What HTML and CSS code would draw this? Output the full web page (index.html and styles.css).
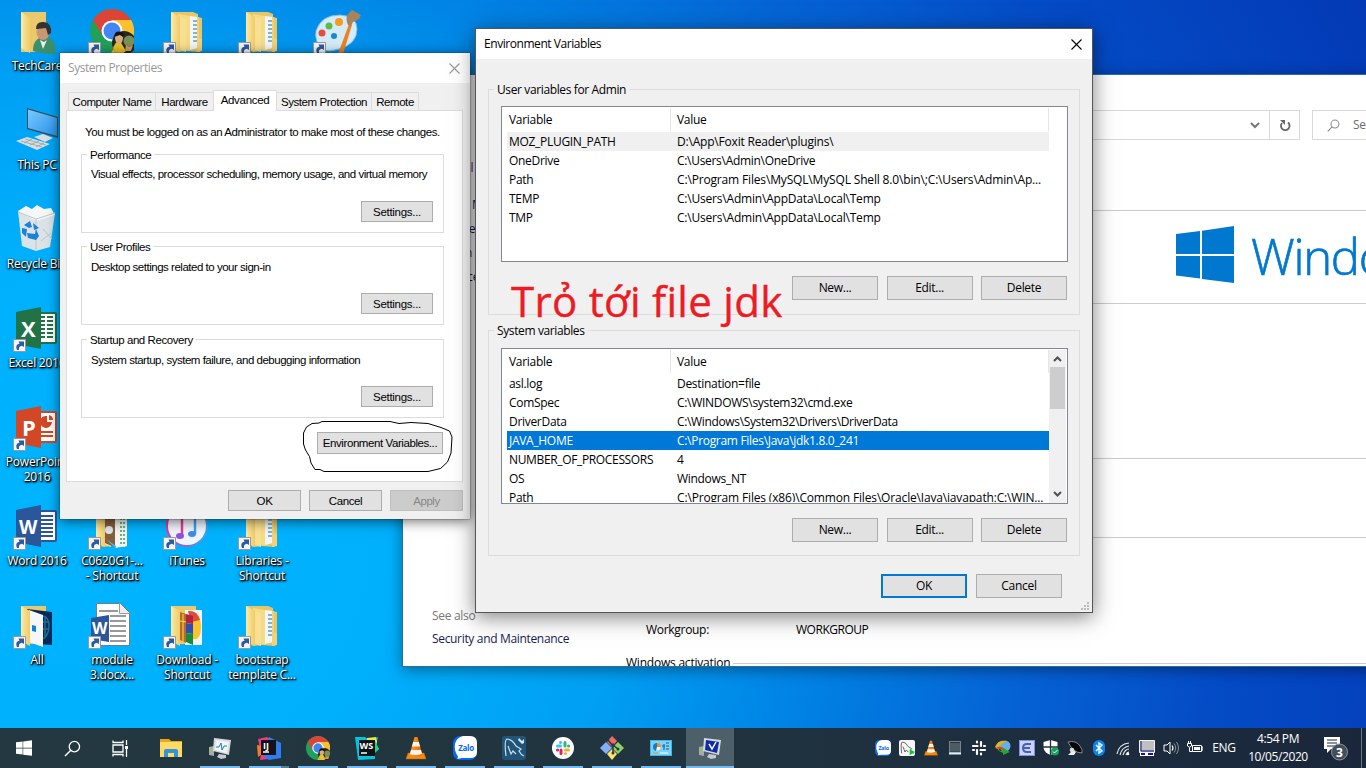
FILE: index.html
```html
<!DOCTYPE html>
<html lang="en">
<head>
<meta charset="utf-8">
<title>Environment Variables</title>
<link rel="stylesheet" href="styles.css">
</head>
<body>
<svg class="defs" aria-hidden="true">
  <defs>
    <linearGradient id="fold" x1="0" x2="1"><stop offset="0" stop-color="#ffe9a2"/><stop offset="1" stop-color="#efcb6b"/></linearGradient>
    <linearGradient id="screen" x1="0" y1="0" x2="1" y2="1"><stop offset="0" stop-color="#7cc8fa"/><stop offset="1" stop-color="#2493ee"/></linearGradient>
    <linearGradient id="tune" x1="0" x2="1"><stop offset="0" stop-color="#f0329b"/><stop offset="1" stop-color="#30a7f4"/></linearGradient>
    <linearGradient id="cone" x1="0" x2="1"><stop offset="0" stop-color="#ffa22e"/><stop offset="1" stop-color="#e86400"/></linearGradient>
    <symbol id="badge" viewBox="0 0 13 13"><path d="M.5.5h12v12H.5z" fill="#f5f5f5" stroke="#999"/><path d="M4 11C2.400 7 4 5 6.500 4.800L5.500 2.500H11V8L9 6.700C6.500 7 5.500 8 6 11z" fill="#2b5b9f"/></symbol>
    <symbol id="folder" viewBox="0 0 49 48"><path d="M8 5h22l5 2v3l4 1v21l-2 13-14-1-8 1-7-4z" fill="#e9c563"/><path d="M15 7l12 2v35l-9-3z" fill="#f6db87"/><path d="M27 9l8 1v31l-8 2z" fill="#f3f6f8"/><path d="M30 14h4M30 18h4M30 22h4M30 26h4M30 30h4M30 34h4" stroke="#5ba0bd" stroke-width="1.500"/><path d="M34 10h2v21l3 1v12l-5 1z" fill="#f3d175"/><path d="M8 5l9 5v35l-9-5z" fill="url(#fold)"/><path d="M17 10l6 2v33l-6-2z" fill="#f9df91"/></symbol>
    <symbol id="chrome" viewBox="0 0 44 44"><circle cx="22" cy="22" r="22" fill="#21a05a"/><path d="M3 11A22 22 0 0 1 41 11H22L13 27z" fill="#db4437"/><path d="M22 11h19.200A22 22 0 0 1 21 44l11-18z" fill="#fbc02d"/><circle cx="22" cy="22" r="10.500" fill="#fff"/><circle cx="22" cy="22" r="8.500" fill="#4285f4"/><circle cx="34" cy="34" r="12" fill="#252724"/><path d="M23 39q2-6 7-7l6 10-4 3-6-1z" fill="#eac126"/><ellipse cx="29" cy="29" rx="4" ry="6" fill="#d8ad86"/><path d="M24 28q1-7 7-5 4 1 2 5l-3-2z" fill="#18120f"/><circle cx="39" cy="32" r="5.500" fill="#7d8f50"/><path d="M36 36q3 3 7 0l-2 6h-6z" fill="#cc9d61"/></symbol>
    <symbol id="vlc" viewBox="0 0 22 24"><path d="M3 17h16l2 6H1z" fill="#f58a0c" stroke="#bf6400" stroke-width=".5"/><path d="M9.500 1h3l5 18q-6 3-13 0z" fill="url(#cone)"/><path d="M8.200 6h5.600l1.300 4.500H7zM6 14h10l1 4q-6 2-12 0z" fill="#f7f4ee"/></symbol>
    <symbol id="zalo" viewBox="0 0 24 24"><rect width="24" height="24" rx="7" fill="#0668f7"/><path d="M10 0h7q7 0 7 7v9q0 6-7 6H9l-5 1q2-2 0-4Q1 14 2 8q1-6 8-8z" fill="#fff"/><text x="13" y="15" text-anchor="middle" class="zalo-text">Zalo</text></symbol>
    <symbol id="slack" viewBox="0 0 22 22"><circle class="disc" cx="11" cy="11" r="11"/><g fill="none" stroke-width="3" stroke-linecap="round"><path class="s1" d="M8.500 5.500v.1M5.500 9h3"/><path class="s2" d="M13 5.500v3.500M16.500 9h.1"/><path class="s3" d="M13.500 16.500v-.1M13.500 13h3"/><path class="s4" d="M9 16.500V13M5.500 13h.1"/></g></symbol>
    <symbol id="dolphin" viewBox="0 0 24 24"><path d="M4 20Q2 4 5 3q5 0 9 7l5 3-2 2q2 4 5 5m-8-2l-3-3-2 3-3-8" fill="none" stroke="currentColor" stroke-width="1.200"/></symbol>
    <symbol id="pc" viewBox="0 0 24 24"><path d="M1 11l5-1v10l-5-1z" fill="#a6acad"/><path d="M2 13h2" stroke="#7ddb27" stroke-width="2"/><path d="M6 2l17 2-2 15-16-4z" fill="#d6dadb"/><path class="glass" d="M8 4l13 2-2 11-12-3z"/><path d="M11 18l7 1v3l-5 1-4-2z" fill="#c6cacb"/></symbol>
    <symbol id="win" viewBox="0 0 58 57"><path d="M0 8l24-3v23H0zM26 4.700L58 0v28H26zM0 30h24v22.500L0 49.500zM26 30h32v27l-32-4z" fill="currentColor"/></symbol>
    <symbol id="glass" viewBox="0 0 18 18"><circle cx="11" cy="7" r="5.500" fill="none" stroke="currentColor" stroke-width="1.400"/><path d="M7 11l-6 6" stroke="currentColor" stroke-width="1.500"/></symbol>
    <symbol id="close" viewBox="0 0 11 11"><path d="M.5.5l10 10m0-10l-10 10" stroke="currentColor" stroke-width="1.100"/></symbol>
  </defs>
</svg>

<main class="desktop">
  <section class="icons">
    <div class="icon c1 r1"><svg viewBox="0 0 49 48"><path d="M8 5h25v40H8z" fill="#eac96c"/><path d="M8 5l9 6v35l-9-5z" fill="url(#fold)"/><path d="M20 44q0-14 12-14t10 17q-14 0-22-3z" fill="#3b8f69"/><ellipse cx="30" cy="25" rx="6.500" ry="8" fill="#c99772"/><path d="M23 22q0-8 8-7 8 1 7 11l-3 2-2-7-9 1z" fill="#333"/><path d="M27 33l3 9 4-9-3 2z" fill="#eee"/></svg><span>TechCare</span></div>
    <div class="icon c2 r1"><svg viewBox="0 0 49 48"><use href="#chrome" x="2" y="2" width="44" height="44"/><use href="#badge" x="0" y="35" width="13" height="13"/></svg></div>
    <div class="icon c3 r1"><svg viewBox="0 0 49 48"><use href="#folder"/><use href="#badge" x="0" y="35" width="13" height="13"/></svg></div>
    <div class="icon c4 r1"><svg viewBox="0 0 49 48"><use href="#folder"/><use href="#badge" x="0" y="35" width="13" height="13"/></svg></div>
    <div class="icon c5 r1"><svg viewBox="0 0 49 48"><path d="M3 24Q8 8 27 8q17 1 17 14 0 15-18 20Q6 48 4 35q-2-6-1-11z" fill="#d4ebf8" stroke="#8cbbdc"/><circle cx="9" cy="26" r="3.500" fill="#ea4b3c"/><circle cx="16" cy="19" r="3.500" fill="#5dbb46"/><circle cx="26" cy="15" r="4" fill="#f79a1d"/><circle cx="21" cy="29" r="3" fill="#1b88d2"/><path d="M25 47l11-30 3 1-9 29z" fill="#ee8222"/><path d="M35 18q-3-6 0-11l4-4 9 5-2 4-6 3-2 4z" fill="#aa835b"/><use href="#badge" x="0" y="35" width="13" height="13"/></svg></div>
    <div class="icon c1 r2"><svg viewBox="0 0 49 48"><path d="M14 2l31 9v21l-31-9z" fill="#384d5c"/><path d="M15 3.500l29 8.500v18l-29-8z" fill="url(#screen)"/><path d="M21 31l9-3 10 4-8 4zM3 35l11-4 23 7-13 6z" fill="#d8dfe2"/><path d="M8 35l21 6M12 33l21 6M11 37l8-4M17 39l9-4M23 41l8-4" stroke="#8e989d" stroke-width=".7"/></svg><span>This PC</span></div>
    <div class="icon c1 r3"><svg viewBox="0 0 49 48"><path d="M5 6l37 2-5 34-14 4-14-5z" fill="#dce3e6"/><path d="M5 6l8-5 6 3 5-4 7 4 7-1 4 7-19 6z" fill="#f5f6f6"/><path d="M5 7l18 7 19-6M23 14v31M30 24l9 10M28 36l10-8" stroke="#bac7cc" fill="none"/><path d="M11 20l6-4 2 6-3 1zM9 23l5 1-1 8-4-4zM15 33l-1-5 8 1 1-5 3 7-3 4zM20 18l6 5-5 2z" fill="#1b82d7"/></svg><span>Recycle Bin</span></div>
    <div class="icon c1 r4"><svg viewBox="0 0 49 48"><rect x="25" y="8" width="19" height="32" rx="2" fill="#217346"/><path d="M27 10h15v28H27z" fill="#fff"/><path d="M28 13h4m2 0h6M28 17h4m2 0h6M28 21h4m2 0h6M28 25h4m2 0h6M28 29h4m2 0h6M28 33h4m2 0h6" stroke="#217346" stroke-width="2"/><path d="M3 8l25-5v42L3 40z" fill="#217346"/><text class="office" x="8" y="33">X</text><use href="#badge" x="0" y="35" width="13" height="13"/></svg><span>Excel 2016</span></div>
    <div class="icon c1 r5"><svg viewBox="0 0 49 48"><rect x="25" y="8" width="19" height="32" rx="2" fill="#d24726"/><path d="M27 10h15v28H27z" fill="#fff"/><path d="M28 29h12m-12 4h12" stroke="#d24726" stroke-width="2"/><path d="M34 13a6 6 0 1 0 5 6h-5z" fill="#d24726"/><path d="M36 12q4 1 4 5h-4z" fill="#d24726"/><path d="M3 8l25-5v42L3 40z" fill="#d24726"/><text class="office" x="9" y="33">P</text><use href="#badge" x="0" y="35" width="13" height="13"/></svg><span>PowerPoint<br>2016</span></div>
    <div class="icon c1 r6"><svg viewBox="0 0 49 48"><rect x="25" y="8" width="19" height="32" rx="2" fill="#2b579a"/><path d="M27 10h15v28H27z" fill="#fff"/><path d="M28 14h12m-12 4h12m-12 4h12m-12 4h12m-12 4h12m-12 4h12" stroke="#2b579a" stroke-width="2"/><path d="M3 8l25-5v42L3 40z" fill="#2b579a"/><text class="office w" x="6" y="32">W</text><use href="#badge" x="0" y="35" width="13" height="13"/></svg><span>Word 2016</span></div>
    <div class="icon c2 r6"><svg viewBox="0 0 49 48"><use href="#folder"/><path d="M17 8l11 4v34l-11-5z" fill="#85603b"/><circle cx="21" cy="28" r="4" fill="#dce7ee"/><path d="M27 12l12-3v35l-12 2z" fill="#f5f5f1"/><path d="M33 12v30M36 12v30" stroke="#3a986f" stroke-width="1.500" stroke-dasharray="2 2"/><path d="M18 37l10 7v3z" fill="#4cb9ed"/><use href="#badge" x="0" y="35" width="13" height="13"/></svg><span>C0620G1-...<br>- Shortcut</span></div>
    <div class="icon c3 r6"><svg viewBox="0 0 49 48"><circle cx="24" cy="24" r="20" fill="#f0f4fb" stroke="url(#tune)" stroke-width="2"/><path d="M19 34V15l13-3v20" fill="none" stroke="url(#tune)" stroke-width="2.500"/><ellipse cx="17" cy="34" rx="4" ry="3" fill="#9051dd"/><ellipse cx="29" cy="32" rx="4" ry="3" fill="#428be7"/><use href="#badge" x="0" y="35" width="13" height="13"/></svg><span>iTunes</span></div>
    <div class="icon c4 r6"><svg viewBox="0 0 49 48"><use href="#folder"/><use href="#badge" x="0" y="35" width="13" height="13"/></svg><span>Libraries -<br>Shortcut</span></div>
    <div class="icon c1 r7"><svg viewBox="0 0 49 48"><path d="M8 5h25v38H8z" fill="#eac96c"/><path d="M14 8l25 3v33l-16-1z" fill="#062a57"/><path d="M30 15q6 1 6 10t-6 13M28 21h8M28 28h8M32 15v22" stroke="#1a6f99" fill="none" stroke-width="1.500"/><path d="M16 9l14 5v32l-14-5z" fill="#f5f6f8"/><path d="M19 24l4 1v6l-4-1z" fill="#0d81db"/><path d="M8 5l9 5v35l-9-5z" fill="url(#fold)"/><use href="#badge" x="0" y="35" width="13" height="13"/></svg><span>All</span></div>
    <div class="icon c2 r7"><svg viewBox="0 0 49 48"><path d="M8.500 2.500h24l9 9v33h-33z" fill="#fff" stroke="#6e7e8d"/><path d="M31.500 2.500v10h10" fill="#eee" stroke="#999"/><path d="M11 10h19M22 15h16M22 20h16M22 25h16M22 30h16M22 35h16M22 40h16" stroke="#777" stroke-width="1.500"/><path d="M3 17l18-3v27L3 38z" fill="#2b579a"/><text class="office small" x="4" y="33">W</text><use href="#badge" x="0" y="35" width="13" height="13"/></svg><span>module<br>3.docx...</span></div>
    <div class="icon c3 r7"><svg viewBox="0 0 49 48"><path d="M8 5h25v38H8z" fill="#eac96c"/><path d="M22 9h17v35H22z" fill="#f5f5f5"/><path d="M26 11q12-2 12 16 0 13-9 11z" fill="#f7c62e"/><path d="M25 10q9-1 12 9l-9 2z" fill="#df4b3c"/><path d="M17 11l6 2v29l-6-3z" fill="#b76c26"/><path d="M23 13l7 2v8l-7-1z" fill="#b5223e"/><path d="M23 22l7 1v10l-7-1z" fill="#304db2"/><path d="M23 32l7 1v11l-7-3z" fill="#168c3d"/><path d="M20 13v28M17 20l6 1" stroke="#ffd94f"/><path d="M8 5l9 5v35l-9-5z" fill="url(#fold)"/><use href="#badge" x="0" y="35" width="13" height="13"/></svg><span>Download -<br>Shortcut</span></div>
    <div class="icon c4 r7"><svg viewBox="0 0 49 48"><use href="#folder"/><use href="#badge" x="0" y="35" width="13" height="13"/></svg><span>bootstrap<br>template C...</span></div>
  </section>

  <section class="window system">
    <div class="nav">
      <div class="address"><svg class="chev" viewBox="0 0 10 7"><path d="M1 1l4 4 4-4" fill="none" stroke="#777" stroke-width="2"/></svg><i></i><svg class="reload" viewBox="0 0 12 13"><path d="M9 3.500A4.300 4.300 0 1 1 3 4" fill="none" stroke="#666" stroke-width="1.800"/><path d="M1 1h5v5L4.500 4.500z" fill="#666"/></svg></div>
      <div class="search"><svg><use href="#glass"/></svg><span>Search</span></div>
    </div>
    <div class="split">
      <aside>
        <p class="visited home">Control</p><p>Device M</p><p>Remote</p><p class="visited">System P</p><p>Advance</p>
        <h4>See also</h4><p class="link">Security and Maintenance</p>
      </aside>
      <div class="info">
        <div class="brand"><svg><use href="#win"/></svg><span>Windows</span></div>
        <div class="specs"></div><div class="pen"></div>
        <dl><dt>Computer description:</dt><dd></dd><dt>Workgroup:</dt><dd class="wg">WORKGROUP</dd></dl>
        <h5>Windows activation</h5>
      </div>
    </div>
  </section>

  <section class="window props">
    <header>System Properties<svg><use href="#close"/></svg></header>
    <div class="tabs"><span class="t1">Computer Name</span><span class="t2">Hardware</span><span class="t3 on">Advanced</span><span class="t4">System Protection</span><span class="t5">Remote</span></div>
    <div class="panel">
      <p class="note">You must be logged on as an Administrator to make most of these changes.</p>
      <div class="group"><h3>Performance</h3><p>Visual effects, processor scheduling, memory usage, and virtual memory</p><button>Settings...</button></div>
      <div class="group"><h3>User Profiles</h3><p>Desktop settings related to your sign-in</p><button>Settings...</button></div>
      <div class="group"><h3>Startup and Recovery</h3><p>System startup, system failure, and debugging information</p><button>Settings...</button></div>
      <button class="env-btn">Environment Variables...</button>
    </div>
    <footer><button>OK</button><button>Cancel</button><button class="off">Apply</button></footer>
    <svg class="loop" viewBox="300 418 156 58"><path d="M341 421.500H390L399 423.500 411 422.500 428 423.500 441 427.500 449.500 431 452 437 451 453 447.500 462 440.500 468.500 428 471.500H324L320 469.500H315L311 463 309.500 456.500 305.500 450 303.500 444V433L306.500 427 312 423.500 319 423 322 421.500H341" fill="none" stroke="#000"/></svg>
  </section>

  <section class="window env">
    <header>Environment Variables<svg><use href="#close"/></svg></header>
    <div class="box user">
      <h3>User variables for Admin</h3>
      <div class="list">
        <div class="head"><span>Variable</span><span>Value</span></div>
        <div class="row hot"><span>MOZ_PLUGIN_PATH</span><span class="mid">D:\App\Foxit Reader\plugins\</span></div>
        <div class="row"><span>OneDrive</span><span>C:\Users\Admin\OneDrive</span></div>
        <div class="row"><span>Path</span><span class="long">C:\Program Files\MySQL\MySQL Shell 8.0\bin\;C:\Users\Admin\Ap...</span></div>
        <div class="row"><span>TEMP</span><span class="mid">C:\Users\Admin\AppData\Local\Temp</span></div>
        <div class="row"><span>TMP</span><span class="mid">C:\Users\Admin\AppData\Local\Temp</span></div>
      </div>
      <div class="actions"><button>New...</button><button>Edit...</button><button>Delete</button></div>
    </div>
    <div class="box sys">
      <h3>System variables</h3>
      <div class="list">
        <div class="head"><span>Variable</span><span>Value</span></div>
        <div class="row"><span>asl.log</span><span>Destination=file</span></div>
        <div class="row"><span>ComSpec</span><span>C:\WINDOWS\system32\cmd.exe</span></div>
        <div class="row"><span>DriverData</span><span class="tight">C:\Windows\System32\Drivers\DriverData</span></div>
        <div class="row sel"><span>JAVA_HOME</span><span>C:\Program Files\Java\jdk1.8.0_241</span></div>
        <div class="row"><span class="tight">NUMBER_OF_PROCESSORS</span><span>4</span></div>
        <div class="row"><span>OS</span><span>Windows_NT</span></div>
        <div class="row"><span>Path</span><span class="long">C:\Program Files (x86)\Common Files\Oracle\Java\javapath;C:\WIN...</span></div>
        <div class="scroll"><svg viewBox="0 0 9 6"><path d="M1 5l3.500-3.500L8 5"/></svg><i></i><svg viewBox="0 0 9 6"><path d="M1 1l3.500 3.500L8 1"/></svg></div>
      </div>
      <div class="actions"><button>New...</button><button>Edit...</button><button>Delete</button></div>
    </div>
    <footer><button class="default">OK</button><button>Cancel</button></footer>
    <svg class="grip" viewBox="0 0 8 8"><path d="M6 0h2v2H6zM3 3h2v2H3zM6 3h2v2H6zM0 6h2v2H0zM3 6h2v2H3zM6 6h2v2H6z" fill="#bbb"/></svg>
  </section>
  <div class="caption">Trỏ tới file jdk</div>
</main>

<nav class="taskbar">
  <div class="app"><svg class="s16"><use href="#win"/></svg></div>
  <div class="app"><svg class="s17"><use href="#glass"/></svg></div>
  <div class="app view"><svg class="s17" viewBox="0 0 17 17"><path d="M1 .5v2h10v-2M1 16.500v-2h10v2M1 5h10v7H1zM14.500 0v5M14.500 9v8" fill="none" stroke="#fff" stroke-width="1.300"/><path d="M13 6h3v3h-3z" fill="#fff"/></svg></div>
  <div class="app"><svg viewBox="0 0 24 24"><path d="M1 3h9l2 2h11v16H1z" fill="#e8a915"/><path d="M1 6h22v15H1z" fill="#ffda65"/><path d="M5 21v-6q0-2 2-2h10q2 0 2 2v6h-4v-4H9v4z" fill="#3195dc"/></svg></div>
  <div class="app run"><svg class="white" viewBox="0 0 24 24"><use href="#pc"/><path d="M8 11h3l2-4 1 7 2-4h3" fill="none" stroke="#237caf" stroke-width="1"/></svg></div>
  <div class="app run multi"><svg viewBox="0 0 24 24"><path d="M1 3l9-2 6 4-4 18-9 1 1-6z" fill="#f33b79"/><path d="M12 1l12 6v15l-12 2-6-4z" fill="#307cf0"/><path d="M0 9l5 1v8l-4 3z" fill="#f87b25"/><path d="M4 4h15v15H4z" fill="#151219"/><path d="M6 16h6" stroke="#fff" stroke-width="1.500"/><text class="ide" x="6" y="12.500">IJ</text></svg></div>
  <div class="app run"><svg><use href="#chrome"/></svg></div>
  <div class="app run"><svg viewBox="0 0 24 24"><path d="M0 1l10 0 4 3 9-3-2 8 3 4-4 4v6L3 24z" fill="#07c3df"/><path d="M12 2l9-1 1 5-2 7-8-8z" fill="#e4ed45"/><path d="M20 5l4 8-4 3z" fill="#19d68c"/><path d="M4 4h16v16H4z" fill="#101315"/><path d="M6 17h6" stroke="#fff" stroke-width="1.500"/><text class="ide" x="4.500" y="12.500">WS</text></svg></div>
  <div class="app run"><svg><use href="#vlc"/></svg></div>
  <div class="app run"><svg><use href="#zalo"/></svg></div>
  <div class="app run"><svg viewBox="0 0 24 24"><rect width="24" height="24" rx="3" fill="#205579"/><use href="#dolphin" color="#cbdfed"/><path d="M17 2l3 3 2-2v4l-2 1-4-4z" fill="#dae5ec"/></svg></div>
  <div class="app run"><svg class="s22 colors"><use href="#slack"/></svg></div>
  <div class="app run"><svg viewBox="0 0 24 24"><path d="M12 0l5 5-5 6-5-5z" fill="#f26a68"/><path d="M0 12l6-6 6 6-6 6z" fill="#82b1f8"/><path d="M18 6l6 6-6 6-6-6z" fill="#92cf64"/><path d="M12 13l5 5-5 6-5-6z" fill="#ffe06a"/><path d="M8 4l5 6v8M13 9l5 4" stroke="#263b43" stroke-width="1.500" fill="none"/><circle cx="13" cy="9" r="1.800" fill="#263b43"/><circle cx="18" cy="13" r="1.500" fill="#263b43"/><circle cx="13" cy="17" r="1.500" fill="#263b43"/></svg></div>
  <div class="app run"><svg viewBox="0 0 24 24"><rect x="1.500" y="4.500" width="21" height="15" fill="#7bd2fa" stroke="#42b7ef"/><circle cx="8" cy="11" r="3.500" fill="#fff"/><path d="M8 7v4h4q0-4-4-4z" fill="#f28d22"/><path d="M8 11V7q-4 0-4 4 0 3 3 4" fill="#177cc3"/><path d="M13 10h3M15 8v6M17 7h3M17 10h3M17 13h3" stroke="#175d94"/><path d="M4 17h5" stroke="#f5921e"/><path d="M11 17h8" stroke="#fff"/></svg></div>
  <div class="app run active"><svg class="blue" viewBox="0 0 24 24"><use href="#pc"/><path d="M11 8l3 5 4-7" fill="none" stroke="#fff" stroke-width="1.500"/></svg></div>
  <div class="tray">
    <svg class="mini"><use href="#zalo"/></svg>
    <svg class="mini" viewBox="0 0 24 24"><rect width="24" height="24" rx="3" fill="#f6f6f6"/><use href="#dolphin" color="#444"/><path d="M16 14l8 4-8 5z" fill="#08c925"/></svg>
    <svg class="mini"><use href="#vlc"/></svg>
    <svg class="mini" viewBox="0 0 16 16"><path d="M2 1h12v13H2z" fill="#75838c"/><path d="M3 2h10v10H3z" fill="#24333d"/><path d="M4 3v9M6 3v9M8 3v9M10 3v9M12 3v9M3 4h10M3 6h10M3 8h10M3 10h10" stroke="#84929a" stroke-width=".5"/><path d="M2 13.500h12" stroke="#d8f2fc" stroke-width="2"/></svg>
    <svg class="mini" viewBox="0 0 16 16"><path d="M6 1.500v1M2 6h4.500M10 2v4M13 6h1M14 10H9.500M10 13.500v1M6 14v-4M2 10h1" fill="none" stroke="#fff" stroke-width="2.200" stroke-linecap="round"/></svg>
    <svg class="mini" viewBox="0 0 16 16"><circle cx="10" cy="6" r="5.500" fill="#6aaee5"/><path d="M0 7q4-9 12-5Q5 2 4 10z" fill="#dfb41f"/><path d="M0 9q5-5 11 1l-2 2Q6 7 0 9z" fill="#d94423"/><path d="M2 10l6 1V8l7 4-7 3v-2z" fill="#20aa28"/></svg>
    <svg class="mini" viewBox="0 0 16 16"><path d="M0 0h16v16H0z" fill="#7a8fe8"/><path d="M1 1h14v14H1z" fill="#cbd3fa"/><path d="M12 4H8q-4 0-4 4t4 4h4M5 8h6" fill="none" stroke="#4860b5" stroke-width="2"/></svg>
    <svg class="mini" viewBox="0 0 16 16"><path d="M7.500 0l7 2v6q-1 5-7 7-6-2-7-7V2z" fill="#fff"/><path d="M7.500 0v16M0 7h15" stroke="#25313b" stroke-width="1.300"/><circle cx="12" cy="11.500" r="4" fill="#16a05d"/><path d="M10 11.500l1.500 1.500 3-3" fill="none" stroke="#fff"/></svg>
    <svg class="mini" viewBox="0 0 16 16"><path d="M1 2q8-2 12 4 3 4 2 7Q6 13 1 2z" fill="#080808" stroke="#888"/><path d="M5 9l4 3-2 3H1l3-3z" fill="#eee"/><circle cx="5" cy="10" r="2.300" fill="#ddd"/></svg>
    <svg class="mini" viewBox="0 0 16 16"><rect x="2" width="12" height="16" rx="6" fill="#0986ed"/><path d="M5 5l6 6-3 2V3l3 2-6 6" fill="none" stroke="#fff" stroke-width="1.300"/></svg>
    <svg class="mini" viewBox="0 0 16 16"><path d="M2 14Q4 4 14 3M5 15Q7 7 14 6M8 15q2-6 6-6M11 15q1-3 3-3" fill="none" stroke="#e6eaec" stroke-width="1.200"/><circle cx="13" cy="14" r="1.300" fill="#fff"/></svg>
    <svg class="mini" viewBox="0 0 16 16"><path d="M.5.500h15v12H.500z" fill="#c0c0c0" stroke="#f4f4f4"/><path d="M2 1v10h13" fill="none" stroke="#111180"/><path d="M1 13h14v3H1z" fill="#fff"/><path d="M2 14h4m3 0h5" stroke="#1212a0" stroke-width="2"/></svg>
    <svg class="mini" viewBox="0 0 16 16"><path d="M1 5h3l3-3v12l-3-3H1z" fill="none" stroke="#fff"/><path d="M9 5.500q2 2.500 0 5" fill="none" stroke="#fff" stroke-width="1.200"/><path d="M11 3.500q3.500 4.500 0 9M13.500 2q4 6 0 12" fill="none" stroke="#83909c"/></svg>
    <svg class="mini" viewBox="0 0 16 16"><path d="M5.500 5.500h9v6h-9zM15 7h1v3h-1M2.500 7.500v4h3M.5 3.500h4v2.500q-2 2.500-4 0zM1.500 1v2M3.500 1v2" fill="none" stroke="#fff"/><path d="M7 7h6v3H7z" fill="#fff"/></svg>
    <span class="lang">ENG</span>
    <span class="clock">4:54 PM<br>10/05/2020</span>
    <svg class="notice" viewBox="0 0 26 26"><path d="M1 2h16v12H8l-4 4v-4H1z" fill="#fff"/><path d="M4 5h10M4 8h10M4 11h10" stroke="#1b2b3c" stroke-width="1.200"/><circle cx="16.500" cy="17" r="8" fill="#444e58" stroke="#89929a"/><text x="16.500" y="21.500" text-anchor="middle" class="count">3</text></svg>
    <i class="peek"></i>
  </div>
</nav>
</body>
</html>
```
FILE: styles.css
```css
* { box-sizing: border-box; }
body { margin: 0; width: 1366px; height: 768px; overflow: hidden; font: 12px/16px "Open Sans", "Noto Sans", sans-serif; color: #000; letter-spacing: -.3px; }
h3, h4, h5, p, dl, dd { margin: 0; font-size: inherit; font-weight: normal; }
svg { display: block; flex: none; }
.defs { position: absolute; width: 0; height: 0; }

.desktop { position: relative; height: 728px; overflow: hidden; background: radial-gradient(ellipse 1500px 1250px at 60px 540px, #00b4ff 0, #00b0fd 22%, #009ff3 38%, #0084e5 50%, #0564d5 64%, #044bc6 78%, #0336b2 100%); }
.icons { display: grid; grid-template-columns: repeat(5, 75px); grid-template-rows: repeat(7, 99px); }
.icon { padding-top: 7px; display: flex; flex-direction: column; align-items: center; color: #fff; text-align: center; line-height: 15px; white-space: nowrap; text-shadow: 1px 1px 1px #000, 1px 1px 2px #000, 0 1px 3px #000; letter-spacing: -.22px; }
.icon svg { width: 49px; height: 48px; margin-bottom: 3px; }
.icon span { padding-right: 1px; }
.c1 { grid-column: 1; } .c2 { grid-column: 2; } .c3 { grid-column: 3; } .c4 { grid-column: 4; } .c5 { grid-column: 5; }
.r1 { grid-row: 1; } .r2 { grid-row: 2; } .r3 { grid-row: 3; } .r4 { grid-row: 4; } .r5 { grid-row: 5; } .r6 { grid-row: 6; } .r7 { grid-row: 7; }
.office { font: bold 22px "Open Sans", sans-serif; fill: #fff; text-shadow: none; letter-spacing: 0; }
.office.w { font-size: 19px; letter-spacing: -1px; }
.office.small { font-size: 16px; }
.zalo-text { font: bold 8px "Open Sans", sans-serif; fill: #0668f7; letter-spacing: -.3px; }
.ide { font: bold 9px "Open Sans", sans-serif; fill: #fff; letter-spacing: 0; }

.window { position: absolute; }
button { font: inherit; letter-spacing: inherit; color: #000; padding: 0; background: #e1e1e1; border: 1px solid #adadad; height: 24px; display: block; }
header { height: 30px; background: #fff; display: flex; align-items: center; justify-content: space-between; padding-left: 8px; letter-spacing: -.44px; }
header svg { width: 11px; height: 11px; }

.system { left: 402px; top: 74px; width: 1000px; height: 593px; overflow: hidden; background: #fff; border: 1px solid #2a6f9c; box-shadow: 0 3px 14px rgba(0,0,0,.4); }
.nav { display: flex; margin: 35px 0 0 151px; height: 30px; gap: 12px; }
.address { width: 746px; border: 1px solid #d9d9d9; display: flex; align-items: center; justify-content: flex-end; flex: none; margin-left: 0; }
.address .chev { width: 10px; height: 7px; }
.address i { height: 28px; width: 1px; background: #d9d9d9; margin: 0 9px; }
.address .reload { width: 12px; height: 13px; margin-right: 8px; }
.search { flex: none; width: 200px; border: 1px solid #d9d9d9; display: flex; align-items: center; padding-left: 14px; gap: 13px; color: #6d6d6d; white-space: nowrap; }
.search svg { width: 13px; height: 13px; color: #888; }
.split { display: grid; grid-template-columns: 223px 1fr; }
aside { padding-left: 29px; color: #151c55; line-height: 24px; letter-spacing: 0; }
aside .home { padding: 16px 0 13px; }
aside .link { letter-spacing: -.33px; margin-top: -1px; }
.visited { color: #641a74; }
aside h4 { color: #7a7a7a; margin-top: 315px; letter-spacing: -.3px; }
.info { padding-top: 70px; }
.brand { height: 94px; border: solid #ccc; border-width: 1px 0; padding: 15px 0 0 550px; display: flex; gap: 17px; color: #0078d0; white-space: nowrap; }
.brand svg { width: 58px; height: 57px; }
.brand span { font-size: 49px; line-height: 60px; font-weight: 300; letter-spacing: -1.3px; -webkit-text-stroke: .7px #0078d0; }
.specs { height: 154px; }
.pen { height: 80px; border: solid #ccc; border-width: 1px 0; }
dl { margin: 56px 0 0 20px; display: grid; grid-template-columns: 150px 1fr; line-height: 24px; letter-spacing: -.3px; }
dl dt:first-child { margin-top: 3px; height: 21px; line-height: 18px; }
.wg { letter-spacing: -.48px; }
h5 { margin-top: 13px; display: flex; align-items: center; gap: 3px; letter-spacing: -.22px; }
h5::after { content: ""; flex: 1; height: 1px; background: #ccc; }

.props { left: 60px; top: 53px; width: 410px; height: 466px; background: #f0f0f0; box-shadow: 0 2px 12px rgba(0,0,0,.6), 0 0 1px #222; font: 11.500px/16px "Liberation Sans", sans-serif; letter-spacing: -.42px; }
.props header { color: #999; font: 12px/16px "Open Sans", sans-serif; letter-spacing: -.45px; padding-right: 10px; }
.tabs { display: flex; align-items: flex-end; height: 27px; padding-left: 8px; text-align: center; }
.tabs span { height: 18px; border: 1px solid #dcdcdc; border-width: 1px 1px 0 0; line-height: 19px; }
.tabs .t1 { width: 88px; border-left-width: 1px; } .tabs .t2 { width: 57px; border-right: 0; }
.tabs .t3 { width: 64px; } .tabs .t4 { width: 95px; } .tabs .t5 { width: 47px; }
.tabs .on { height: 21px; margin-bottom: -1px; background: #fff; border-left-width: 1px; line-height: 18px; z-index: 1; }
.tabs .on, .group button { letter-spacing: -.3px; }
.panel { margin: 0 7px 0 6px; height: 372px; border: 1px solid #dcdcdc; background: #fff; padding: 0 18px 0 14px; white-space: nowrap; }
.note { padding: 13px 0 0 4px; margin-bottom: 14px; }
.group { height: 79px; border: 1px solid #dcdcdc; margin-bottom: 14px; padding: 0 10px 0 9px; }
.group:nth-child(2) { margin-bottom: 13px; }
h3 { width: fit-content; margin-top: -8px; padding: 0 3px; }
.group h3 { margin-left: -4px; background: #fff; }
.group p { margin: 4px 0 18px; letter-spacing: -.48px; }
.group:nth-child(2) p { margin: 3px 0 19px; }
.group button { margin-left: auto; width: 72px; height: 21px; }
.env-btn { width: 126px; height: 22px; margin: 0 1px 0 auto; }
.props footer { display: flex; gap: 8px; justify-content: flex-end; padding: 8px 7px 0 0; }
.props footer button { width: 73px; height: 21px; }
.props footer .off { background: #ccc; border-color: #bfbfbf; color: #888; }
.loop { position: absolute; left: 240px; top: 365px; width: 156px; height: 58px; }

.env { left: 475px; top: 28px; width: 618px; height: 585px; background: #f0f0f0; border: 1px solid #555; box-shadow: 0 4px 20px rgba(0,0,0,.5); }
.env header { padding-right: 10px; }
.box { width: 592px; height: 226px; margin-left: 12px; border: 1px solid #dcdcdc; }
.user { margin-top: 30px; } .sys { margin-top: 15px; }
.box h3 { margin-left: 5px; background: #f0f0f0; letter-spacing: -.38px; }
.list { position: relative; margin: 8px 0 14px 12px; width: 567px; height: 156px; border: 1px solid #828790; background: #fff; overflow: hidden; padding-left: 5px; white-space: nowrap; }
.list::after { content: ""; position: absolute; left: 0; bottom: 0; width: 547px; height: 1px; background: #fff; }
.sys .list { margin-top: 9px; }
.head, .row { display: grid; grid-template-columns: 164px 378px; line-height: 19px; }
.head { height: 25px; padding: 1px 0; line-height: 23px; }
.head span { border-right: 1px solid #e5e5e5; }
.head span, .row span { padding-left: 2px; }
.head span + span, .row span + span { padding-left: 6px; }
.row { width: 542px; }
.row .mid { letter-spacing: -.2px; } .row .long { letter-spacing: -.16px; } .row .tight { letter-spacing: -.35px; }
.hot { background: #f0f0f0; } .sel { background: #0078d7; color: #fff; }
.actions { display: flex; margin-left: 303px; gap: 8.500px; }
.actions button, .env footer button { width: 86px; }
.env footer { display: flex; gap: 9px; margin: 18px 0 0 405px; }
.env footer .default { border: 2px solid #0078d7; }
.scroll { position: absolute; right: 1px; top: 1px; width: 17px; height: 153px; background: #f0f0f0; display: flex; flex-direction: column; align-items: center; }
.scroll svg { width: 9px; height: 6px; margin: 6px 0 5px; }
.scroll svg:last-child { margin-top: auto; margin-bottom: 6px; }
.scroll path { fill: none; stroke: #505050; stroke-width: 2; }
.scroll i { width: 15px; height: 42px; background: #cdcdcd; }
.grip { position: absolute; right: 3px; bottom: 2px; width: 8px; height: 8px; }
.caption { position: absolute; left: 511px; top: 271px; color: #ed1c24; font-size: 42px; line-height: 60px; letter-spacing: .3px; white-space: nowrap; -webkit-text-stroke: .4px #ed1c24; }

.taskbar { height: 40px; display: flex; background: linear-gradient(90deg, #233840, #20343f 50%, #1c2c3e 80%, #1a273a); color: #fff; }
.app { width: 48px; margin-right: 1px; display: flex; align-items: center; justify-content: center; }
.app:nth-child(-n+2) { margin-right: 0; }
.view { margin-right: 3px; }
.app svg { width: 24px; height: 24px; }
.app .s16 { width: 16px; height: 16px; } .app .s17 { width: 17px; height: 17px; } .app .s22 { width: 22px; height: 22px; }
.run { background: linear-gradient(#76b9ed, #76b9ed) center bottom / 40px 2px no-repeat; }
.multi { background: linear-gradient(90deg, #76b9ed 32px, #587e9e 32px) center bottom / 40px 2px no-repeat; }
.active { background-color: #4d5f69; background-size: 48px 2px; }
.white { fill: #f0f5f7; } .blue { fill: #102ba8; }
.colors { fill: #fff; --s1: #36c5f0; --s2: #2eb67d; --s3: #ecb22e; --s4: #e01e5a; }
.s1 { stroke: var(--s1); } .s2 { stroke: var(--s2); } .s3 { stroke: var(--s3); } .s4 { stroke: var(--s4); }
.tray { margin-left: auto; display: flex; align-items: center; width: 495px; flex: none; }
.mini { width: 16px; height: 16px; margin: 0 4px; }
.lang { width: 34px; text-align: center; }
.clock { width: 76px; margin-left: -1px; text-align: center; line-height: 18px; letter-spacing: -.4px; }
.notice { width: 26px; height: 26px; margin-left: 7px; }
.count { font: bold 12px "Open Sans", sans-serif; fill: #fff; letter-spacing: 0; }
.peek { width: 1px; height: 40px; background: #69737e; margin-left: auto; margin-right: 4px; }
```
